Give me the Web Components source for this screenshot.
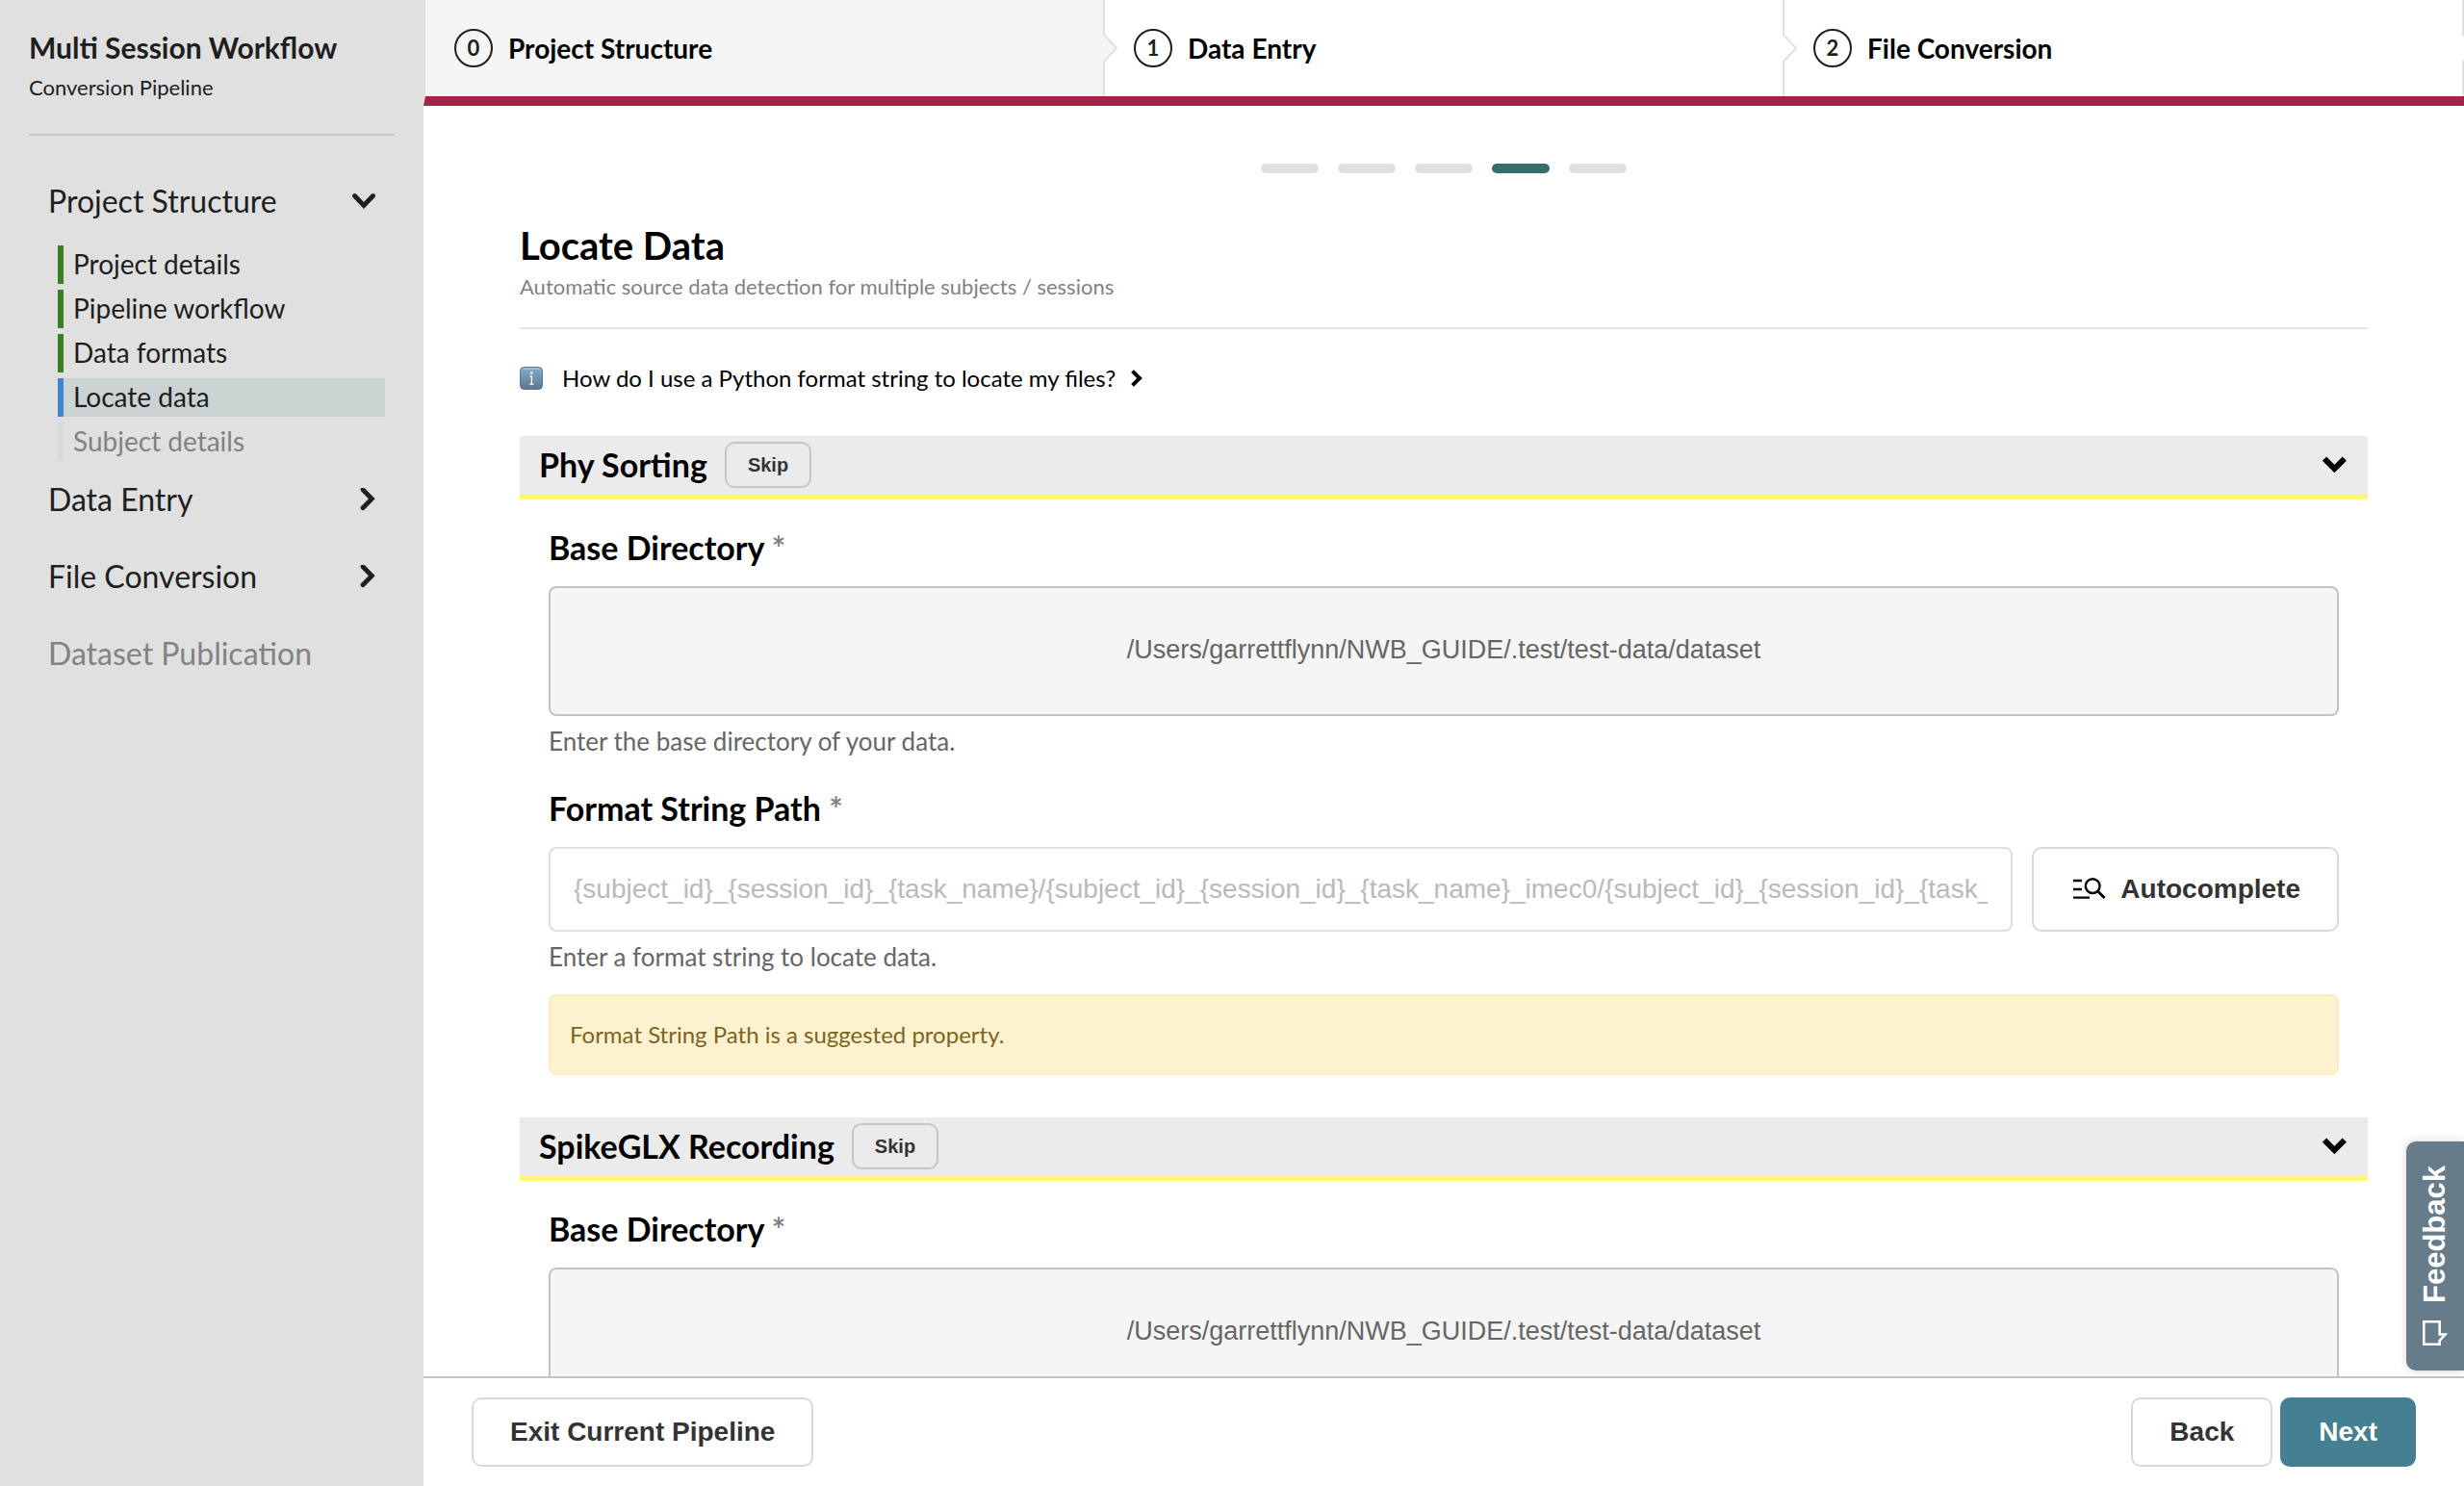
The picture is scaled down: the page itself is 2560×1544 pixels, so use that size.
<!DOCTYPE html>
<html lang="en">
<head>
<meta charset="utf-8">
<meta name="viewport" content="width=device-width, initial-scale=1">
<title>Multi Session Workflow</title>
<style>
  html, body { height: 100%; margin: 0; }
  body {
    background: #fff;
    color: #000;
    font-family: Lato, "Open Sans", sans-serif;
    --ui-font: "Liberation Sans", Arial, sans-serif;
  }
</style>
</head>
<body>
<guide-app>
  <guide-sidebar slot="sidebar" heading="Multi Session Workflow" subheading="Conversion Pipeline">
    <nav-section label="Project Structure" open>
      <nav-item state="done">Project details</nav-item>
      <nav-item state="done">Pipeline workflow</nav-item>
      <nav-item state="done">Data formats</nav-item>
      <nav-item state="current">Locate data</nav-item>
      <nav-item state="locked">Subject details</nav-item>
    </nav-section>
    <nav-section label="Data Entry"></nav-section>
    <nav-section label="File Conversion"></nav-section>
    <nav-section label="Dataset Publication" locked></nav-section>
  </guide-sidebar>

  <step-bar slot="header">
    <step-tab number="0" active>Project Structure</step-tab>
    <step-tab number="1">Data Entry</step-tab>
    <step-tab number="2">File Conversion</step-tab>
  </step-bar>

  <page-progress total="5" current="4"></page-progress>
  <page-heading heading="Locate Data">Automatic source data detection for multiple subjects / sessions</page-heading>
  <info-toggle>How do I use a Python format string to locate my files?</info-toggle>

  <data-panel heading="Phy Sorting">
    <directory-field label="Base Directory" value="/Users/garrettflynn/NWB_GUIDE/.test/test-data/dataset">Enter the base directory of your data.</directory-field>
    <format-field label="Format String Path" placeholder="{subject_id}_{session_id}_{task_name}/{subject_id}_{session_id}_{task_name}_imec0/{subject_id}_{session_id}_{task_name}_phy">Enter a format string to locate data.</format-field>
    <alert-message>Format String Path is a suggested property.</alert-message>
  </data-panel>
  <data-panel heading="SpikeGLX Recording">
    <directory-field label="Base Directory" value="/Users/garrettflynn/NWB_GUIDE/.test/test-data/dataset"></directory-field>
  </data-panel>

  <action-bar slot="footer">
    <ui-button slot="start">Exit Current Pipeline</ui-button>
    <ui-button>Back</ui-button>
    <ui-button kind="primary">Next</ui-button>
  </action-bar>
  <feedback-tab slot="overlay">Feedback</feedback-tab>
</guide-app>

<script>
const define = (name, render) => customElements.define(name, class extends HTMLElement {
  constructor() {
    super();
    this.attachShadow({ mode: 'open' });
  }
  connectedCallback() {
    const template = document.createElement('template');
    template.innerHTML = '<style>:host,*{box-sizing:border-box} button{font:inherit;color:inherit}</style>' + render(this);
    this.shadowRoot.replaceChildren(template.content.cloneNode(true));
  }
});
const attr = (el, name) => el.getAttribute(name) || '';

define('guide-app', () => `
  <style>
    :host { display: flex; height: 100vh; overflow: hidden; position: relative; }
    .column { flex: 1; min-width: 0; display: flex; flex-direction: column; }
    main { flex: 1; min-height: 0; overflow: hidden; padding: 60px 100px; }
  </style>
  <slot name="sidebar"></slot>
  <div class="column">
    <slot name="header"></slot>
    <main><slot></slot></main>
    <slot name="footer"></slot>
  </div>
  <slot name="overlay"></slot>`);

define('guide-sidebar', el => `
  <style>
    :host { display: block; flex: 0 0 440px; background: #e0e0e0; color: #1e1e1e; }
    header { margin: 0 30px 28px; padding: 30px 0 35px; border-bottom: 2px solid #c9c9c9; }
    h1 { margin: 0 0 10px; font-size: 30px; line-height: 38px; font-weight: 700; }
    p { margin: 0; font-size: 22px; line-height: 26px; }
  </style>
  <header><h1>${attr(el, 'heading')}</h1><p>${attr(el, 'subheading')}</p></header>
  <nav><slot></slot></nav>`);

define('nav-section', el => {
  const open = el.hasAttribute('open');
  const chevron = open ? 'M2.5 6.5 L12 16.5 L21.5 6.5' : 'M11 1.8 L20.3 11.3 L11 20.8';
  return `
  <style>
    :host { display: block; }
    :host([locked]) { color: #828282; }
    button { display: flex; justify-content: space-between; align-items: center; width: 100%; height: 80px;
             padding: 0 50px; border: 0; background: none; font-size: 32px; line-height: 40px; text-align: left; }
    .items { display: flex; flex-direction: column; gap: 6px; padding: 6px 40px 0 60px; }
    svg { width: 24px; height: 24px; fill: none; stroke: currentColor; stroke-width: 4.8; stroke-linecap: round; stroke-linejoin: miter; }
  </style>
  <button type="button">${attr(el, 'label')}${el.hasAttribute('locked') ? '' : `<svg viewBox="0 0 24 24" aria-hidden="true"><path d="${chevron}"/></svg>`}</button>
  ${open ? '<div class="items"><slot></slot></div>' : ''}`;
});

define('nav-item', () => `
  <style>
    :host { display: block; border-left: 6px solid #d6dadb; }
    :host([state=done]) { border-color: #3a8022; }
    :host([state=current]) { border-color: #3f84d2; background: #ccd3d3; }
    :host([state=locked]) { color: #828282; }
    a { display: block; padding: 0 0 2px 10px; font-size: 28px; line-height: 38px; color: inherit; text-decoration: none; }
  </style>
  <a href="#"><slot></slot></a>`);

define('step-bar', () => `
  <style>
    :host { display: flex; flex: none; height: 110px; border-left: 2px solid #e0e0e0; border-bottom: 10px solid #a72346; overflow: hidden; }
  </style>
  <slot></slot>`);

define('step-tab', el => `
  <style>
    :host { flex: 1; display: flex; position: relative; border-right: 2px solid #e0e0e0; background: #fff; }
    :host([active]) { background: #f5f5f5; z-index: 1; }
    button { flex: 1; display: flex; align-items: center; gap: 16px; padding: 0 30px; border: 0; background: none;
             font-size: 28px; line-height: 36px; font-weight: 700; }
    .number { display: flex; justify-content: center; align-items: center; width: 40px; height: 40px;
              border: 2px solid #1e1e1e; border-radius: 50%; color: #1e1e1e; font-size: 22px; line-height: 26px; }
    svg { position: absolute; left: 100%; top: calc(50% - 15px); width: 16px; height: 30px; overflow: visible; z-index: 1; }
    path { fill: #fff; stroke: #e0e0e0; stroke-width: 2; }
    :host([active]) path { fill: #f5f5f5; }
  </style>
  <button type="button"><span class="number">${attr(el, 'number')}</span><slot></slot></button>
  <svg viewBox="0 0 16 30" aria-hidden="true"><path d="M0 1 L1 1 L14 15 L1 29 L0 29"/></svg>`);

define('page-progress', el => {
  const current = Number(attr(el, 'current'));
  const bars = Array.from({ length: Number(attr(el, 'total')) }, (_, i) => `<i${i + 1 === current ? ' class="on"' : ''}></i>`);
  return `
  <style>
    :host { display: flex; justify-content: center; gap: 20px; margin-bottom: 50px; }
    i { width: 60px; height: 10px; border-radius: 5px; background: #e0e0e0; }
    .on { background: #356e6b; }
  </style>${bars.join('')}`;
});

define('page-heading', el => `
  <style>
    :host { display: block; padding-bottom: 29px; border-bottom: 2px solid #e3e3e3; margin-bottom: 37px; }
    h2 { margin: 0 0 5px; font-size: 40px; line-height: 50px; font-weight: 700; }
    p { margin: 0; font-size: 22px; line-height: 26px; color: #828282; }
  </style>
  <h2>${attr(el, 'heading')}</h2><p><slot></slot></p>`);

define('info-toggle', () => `
  <style>
    :host { display: block; margin-bottom: 46px; }
    button { display: flex; align-items: center; padding: 0; border: 0; background: none; font-size: 24px; line-height: 28px; }
    .info { width: 24px; height: 24px; margin-right: 20px; }
    .chevron { width: 12px; height: 18px; margin-left: 16px; fill: none; stroke: #000; stroke-width: 4; }
  </style>
  <button type="button">
    <svg class="info" viewBox="0 0 24 24" aria-hidden="true">
      <defs><linearGradient id="g" x1="0" y1="0" x2="0" y2="1"><stop offset="0" stop-color="#8fb3d3"/><stop offset="0.15" stop-color="#7fa3c2"/><stop offset="1" stop-color="#5c7890"/></linearGradient></defs>
      <rect x="0.5" y="0.5" width="23" height="23" rx="4" fill="url(#g)" stroke="#587794"/>
      <path d="M4 2.2H20" stroke="#a9c6df" stroke-width="1.2" stroke-linecap="round"/>
      <circle cx="12.2" cy="6.6" r="1.3" fill="#fff"/>
      <path d="M10.4 10.2H12.4V17.8M10.2 18.2H14.6" fill="none" stroke="#fff" stroke-width="1.3"/>
    </svg>
    <slot></slot>
    <svg class="chevron" viewBox="0 0 12 18" aria-hidden="true"><path d="M1.6 1.6 L9 9 L1.6 16.4"/></svg>
  </button>`);

define('data-panel', el => `
  <style>
    :host { display: block; margin-bottom: 44px; }
    header { display: flex; align-items: center; gap: 18px; height: 66px; padding: 0 20px; background: #ebebeb; border-bottom: 6px solid #fef67b; }
    h3 { margin: 0; font-size: 34px; line-height: 40px; font-weight: 700; }
    svg { width: 28px; height: 18px; margin-left: auto; fill: none; stroke: #000; stroke-width: 6; }
    .body { padding: 30px 30px 0; }
  </style>
  <header>
    <h3>${attr(el, 'heading')}</h3>
    <ui-button kind="small">Skip</ui-button>
    <svg viewBox="0 0 28 18" aria-hidden="true"><path d="M3 2.6 L13.4 13 L23.8 2.6"/></svg>
  </header>
  <div class="body"><slot></slot></div>`);

const fieldStyle = `
  <style>
    :host { display: block; }
    label { display: block; margin-bottom: 20px; font-size: 34px; line-height: 40px; font-weight: 700; }
    label span { color: #828282; }
    p { margin: 10px 0 0; font-size: 26px; line-height: 32px; color: #666; }
  </style>`;

define('directory-field', el => `${fieldStyle}
  <style>
    :host { margin-bottom: 34px; }
    button { display: block; width: 100%; height: 135px; padding: 0 24px 3px; border: 2px solid #c3c3c3; border-radius: 8px; background: #f5f5f5;
             font-family: var(--ui-font); font-size: 27px; line-height: 32px; color: #666; }
  </style>
  <label for="directory">${attr(el, 'label')} <span>*</span></label>
  <button type="button" id="directory">${attr(el, 'value')}</button>
  <p><slot></slot></p>`);

define('format-field', el => `${fieldStyle}
  <style>
    .row { display: flex; gap: 20px; height: 88px; }
    input { flex: 1; min-width: 0; padding: 0 24px; border: 2px solid #e0e0e0; border-radius: 8px; background: #fff;
            font-family: var(--ui-font); font-size: 28px; }
    input::placeholder { color: #bababa; opacity: 1; }
    ui-button { height: 100%; }
    svg { width: 38px; height: 24px; margin-right: 14px; fill: none; stroke: #000; }
  </style>
  <label for="format">${attr(el, 'label')} <span>*</span></label>
  <div class="row">
    <input id="format" type="text" placeholder="${attr(el, 'placeholder')}">
    <ui-button><svg viewBox="-3 0 38 24" aria-hidden="true"><path d="M0 3H9M0 12H9M0 20.6H17" stroke-width="2.4"/><circle cx="20.2" cy="8.6" r="7.4" stroke-width="2.4"/><path d="M25.3 13.7L32.6 21" stroke-width="2.8"/></svg>Autocomplete</ui-button>
  </div>
  <p><slot></slot></p>`);

define('alert-message', () => `
  <style>
    :host { display: block; margin-top: 23px; padding: 26px 20px; border: 2px solid #fdedbb; border-radius: 8px;
            background: #fdf2d0; color: #7d641e; font-size: 24px; line-height: 28px; }
  </style>
  <slot></slot>`);

define('ui-button', () => `
  <style>
    :host { display: block; height: 72px; }
    :host([kind=small]) { height: 48px; }
    button { display: flex; align-items: center; height: 100%; padding: 0 38px; border: 2px solid #d9d9d9; border-radius: 10px;
             background: #fff; color: #333; font-family: var(--ui-font); font-size: 28px; line-height: 32px; font-weight: 700; }
    :host([kind=small]) button { padding: 0 22px; border-color: #c6c6c6; background: none; font-size: 20px; line-height: 24px; }
    :host([kind=primary]) button { border-color: #448091; background: #448091; color: #fff; }
  </style>
  <button type="button"><slot></slot></button>`);

define('action-bar', () => `
  <style>
    :host { display: flex; flex: none; align-items: center; gap: 8px; padding: 20px 50px; border-top: 2px solid #c3c3c3; background: #fff; }
    .start { margin-right: auto; }
  </style>
  <div class="start"><slot name="start"></slot></div>
  <slot></slot>`);

/* Floats over the content at the right edge */
define('feedback-tab', () => `
  <style>
    :host { position: absolute; right: 0; bottom: 120px; z-index: 2; }
    button { display: flex; align-items: center; gap: 18px; width: 60px; height: 238px; padding: 26px 17px; border: 0;
             border-radius: 0 10px 10px 0; background: #677c8b; color: #fff; box-shadow: 0 0 10px rgba(0, 0, 0, .18);
             font-family: var(--ui-font); font-size: 31px; line-height: 26px; font-weight: 700; writing-mode: vertical-rl; transform: rotate(180deg); }
    svg { flex: none; width: 26px; height: 26px; fill: none; stroke: #fff; stroke-width: 2.6; transform: rotate(180deg); }
  </style>
  <button type="button">
    <svg viewBox="0 0 26 26" aria-hidden="true"><path d="M1.3 1.3H17.7V14.5H23.5L17.7 21V24.7H1.3Z"/></svg>
    <slot></slot>
  </button>`);
</script>
</body>
</html>
